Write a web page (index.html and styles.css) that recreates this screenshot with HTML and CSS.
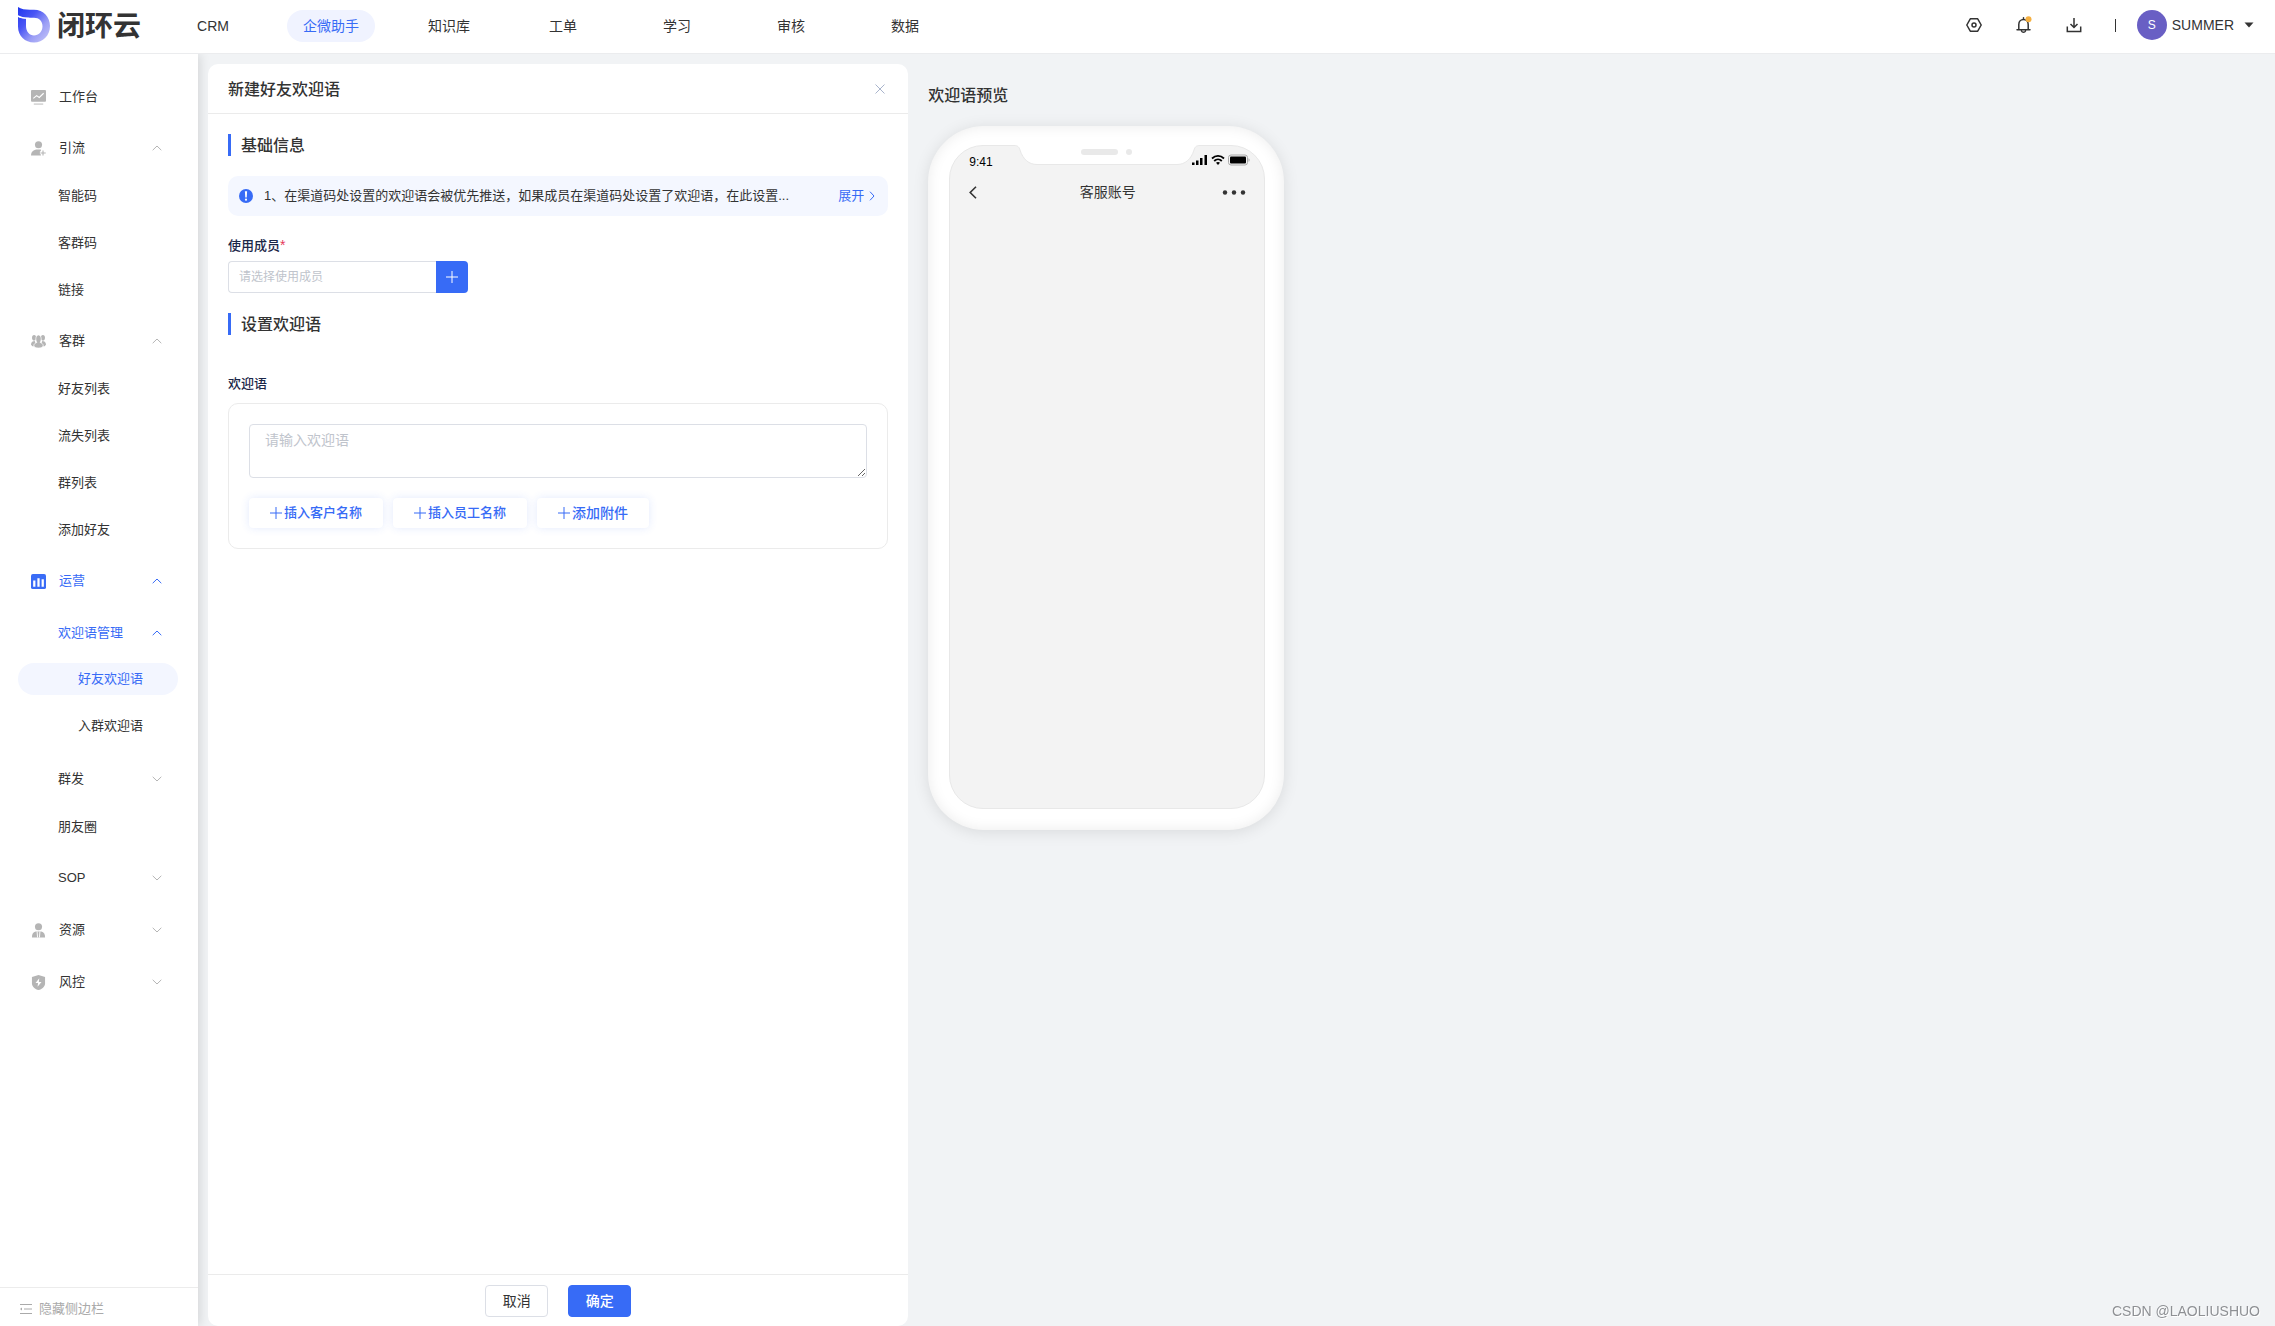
FILE: index.html
```html
<!DOCTYPE html>
<html lang="zh-CN">
<head>
<meta charset="utf-8">
<meta name="viewport" content="width=device-width, initial-scale=1">
<title>新建好友欢迎语</title>
<link rel="stylesheet" href="styles.css">
</head>
<body>
<svg class="sprite" aria-hidden="true">
  <symbol id="up" viewBox="0 0 10 6"><path d="M.7 5.2 5 1l4.3 4.2" fill="none" stroke="currentColor"/></symbol>
  <symbol id="down" viewBox="0 0 10 6"><path d="M.7.8 5 5 9.3.8" fill="none" stroke="currentColor"/></symbol>
  <symbol id="plus" viewBox="0 0 12 12"><path d="M6 0v12M0 6h12" fill="none" stroke="currentColor"/></symbol>
</svg>

<header class="topbar">
  <a class="logo" href="#">
    <svg width="34" height="38" viewBox="0 0 34 38" aria-hidden="true">
      <defs>
        <linearGradient id="brand" x1="0" y1="0" x2="1" y2="1">
          <stop offset="0" stop-color="#1f35ee"/><stop offset=".35" stop-color="#4a56f5"/><stop offset=".65" stop-color="#9a9df5"/><stop offset="1" stop-color="#c9c9f8"/>
        </linearGradient>
      </defs>
      <path fill="url(#brand)" fill-rule="evenodd" d="M1 0c3 2.200 7 2.700 12 2.700h4C26.500 2.700 33 10 33 19c0 9.500-7 16.500-16 16.500S1 29 1 19.500V10c2.500 1.200 5 1.600 8 1.700V19c0 5.500 3.500 9.500 8 9.500s8.500-4 8.500-9.300C25.500 14 22 10.800 17 10.800h-3.500C8 10.800 4 10 1 8.300z"/>
      <path d="M0 8.700c3 2 7 2.600 12 2.600" fill="none" stroke="#fff"/>
    </svg>
    <span>闭环云</span>
  </a>
  <nav class="nav">
    <a href="#"><span>CRM</span></a>
    <a href="#" class="current"><span>企微助手</span></a>
    <a href="#"><span>知识库</span></a>
    <a href="#"><span>工单</span></a>
    <a href="#"><span>学习</span></a>
    <a href="#"><span>审核</span></a>
    <a href="#"><span>数据</span></a>
  </nav>
  <div class="tools">
    <button class="tool" type="button" aria-label="设置"><svg width="16" height="16" viewBox="0 0 16 16"><path d="M4.300 1.800h7.400L15.200 8l-3.500 6.200H4.300L.8 8z" fill="none" stroke="#333" stroke-width="1.500" stroke-linejoin="round"/><circle cx="8" cy="8" r="2" fill="none" stroke="#333" stroke-width="1.500"/></svg></button>
    <button class="tool" type="button" aria-label="通知"><svg width="16" height="18" viewBox="0 0 16 18"><path d="M2.800 13.500V8.500C2.800 5.300 5 3.500 7.500 3.500s4.700 1.800 4.700 5v5M1 13.700h13M7.500 3.500V1.800M5.500 15c.8 1.800 3.200 1.800 4 0" fill="none" stroke="#333" stroke-width="1.500" stroke-linecap="round"/><circle cx="12.500" cy="3.300" r="3" fill="#f5b041"/></svg></button>
    <button class="tool" type="button" aria-label="下载"><svg width="16" height="16" viewBox="0 0 16 16"><path d="M1.300 9.500v5h13.400v-5M8 1v9M4.500 7 8 10.500 11.500 7" fill="none" stroke="#333" stroke-width="1.500"/></svg></button>
    <i class="divider"></i>
    <button class="user" type="button"><span class="avatar">S</span>SUMMER<svg width="10" height="6" viewBox="0 0 10 6" aria-hidden="true"><path d="M.5.500h9L5 5.500z" fill="#333"/></svg></button>
  </div>
</header>

<div class="body">
  <aside class="sidebar">
    <ul class="menu">
      <li><a class="leaf top" href="#"><svg class="icon" viewBox="0 0 16 16"><rect width="16" height="12.500" rx="1" fill="#b5b5b5"/><path d="M2.500 9 6 6l2.800 2L13.500 3.500" fill="none" stroke="#fff" stroke-width="1.200"/><path d="M3 15h10" stroke="#b5b5b5"/></svg>工作台</a></li>
      <li>
        <button class="group top" type="button"><svg class="icon" viewBox="0 0 16 16"><g fill="#b5b5b5"><circle cx="8" cy="4" r="3.800"/><path d="M0 15.500C0 11.500 2.500 9 7 9h3.500v6.500z"/></g><path d="M12.500 9.500v6M9.500 12.500h6.500" stroke="#fff" stroke-width="3"/><path d="M12.800 10v5.500M10 12.800h5.700" stroke="#b5b5b5" stroke-width="1.200"/></svg>引流<svg class="arrow"><use href="#up"/></svg></button>
        <ul>
          <li><a class="leaf" href="#">智能码</a></li>
          <li><a class="leaf" href="#">客群码</a></li>
          <li><a class="leaf" href="#">链接</a></li>
        </ul>
      </li>
      <li>
        <button class="group top" type="button"><svg class="icon" viewBox="0 0 16 16"><g fill="#b5b5b5"><ellipse cx="3.300" cy="4" rx="2.200" ry="3"/><ellipse cx="12.700" cy="4" rx="2.200" ry="3"/><path d="M0 11.500C0 8.500 2 7.500 4 7.500L6 13H1.500zM16 11.500c0-3-2-4-4-4L10 13h4.500z"/></g><g fill="#b5b5b5" stroke="#fff" stroke-width=".8"><path d="M3 12.500C3 10.500 5 9.300 6.200 9 4 5.500 5.500 1 8 1s4 4.500 1.800 8c1.200.3 3.200 1.500 3.200 3.500 0 1.500-2.500 2.500-5 2.500s-5-1-5-2.500z"/></g></svg>客群<svg class="arrow"><use href="#up"/></svg></button>
        <ul>
          <li><a class="leaf" href="#">好友列表</a></li>
          <li><a class="leaf" href="#">流失列表</a></li>
          <li><a class="leaf" href="#">群列表</a></li>
          <li><a class="leaf" href="#">添加好友</a></li>
        </ul>
      </li>
      <li>
        <button class="group top open" type="button"><svg class="icon" viewBox="0 0 16 16"><rect width="16" height="16" rx="2" fill="#3a6cf6"/><path d="M3.500 7v6.500M8 4.500v9M12.500 5.500v8" stroke="#fff" stroke-width="2.400"/></svg>运营<svg class="arrow"><use href="#up"/></svg></button>
        <ul>
          <li>
            <button class="group open parent" type="button">欢迎语管理<svg class="arrow"><use href="#up"/></svg></button>
            <ul class="deep">
              <li><a class="leaf selected" href="#">好友欢迎语</a></li>
              <li><a class="leaf" href="#">入群欢迎语</a></li>
            </ul>
          </li>
          <li><button class="group" type="button">群发<svg class="arrow"><use href="#down"/></svg></button></li>
          <li><a class="leaf" href="#">朋友圈</a></li>
          <li><button class="group" type="button">SOP<svg class="arrow"><use href="#down"/></svg></button></li>
        </ul>
      </li>
      <li><button class="group top" type="button"><svg class="icon" viewBox="0 0 16 16"><g fill="#b5b5b5"><circle cx="8" cy="4" r="3.800"/><path d="M1 15.500C1 12 2 9.500 5 9h6c3 .5 4 3 4 6.500z"/></g><path d="M6.500 9 7 15.500M9.500 9 9 15.500" stroke="#fff"/></svg>资源<svg class="arrow"><use href="#down"/></svg></button></li>
      <li><button class="group top" type="button"><svg class="icon" viewBox="0 0 16 16"><path d="M8 0l7 2.200v6.500c0 4-3.500 6.300-7 7.300-3.500-1-7-3.300-7-7.300V2.200z" fill="#b5b5b5"/><path d="M8.800 3.500 4.800 8.600h2.700L7 12.500l4.200-5H8.400z" fill="#fff"/></svg>风控<svg class="arrow"><use href="#down"/></svg></button></li>
    </ul>
    <button class="collapse" type="button"><svg width="12" height="12" viewBox="0 0 12 12" aria-hidden="true"><path d="M0 1.500h12M4 6h8M0 10.500h12" stroke="#aaa"/><path d="M0 6l2-1.500v3z" fill="#aaa"/></svg>隐藏侧边栏</button>
  </aside>

  <main class="main">
    <form class="panel">
      <div class="panel-head">
        <h1>新建好友欢迎语</h1>
        <button class="close" type="button" aria-label="关闭"><svg width="10" height="10" viewBox="0 0 10 10"><path d="M.5.500l9 9M9.500.500l-9 9" stroke="#a9b4cc"/></svg></button>
      </div>
      <div class="panel-body">
        <h2>基础信息</h2>
        <div class="notice">
          <svg width="14" height="14" viewBox="0 0 14 14" aria-hidden="true"><circle cx="7" cy="7" r="7" fill="#376bf6"/><path d="M5.900 2.300h2.200L7.700 8.500H6.300z" fill="#fff"/><circle cx="7" cy="10.700" r="1.100" fill="#fff"/></svg>
          <p>1、在渠道码处设置的欢迎语会被优先推送，如果成员在渠道码处设置了欢迎语，在此设置...</p>
          <a href="#">展开<svg width="6" height="10" viewBox="0 0 6 10" aria-hidden="true"><path d="M1 .7 5 5 1 9.300" fill="none" stroke="currentColor"/></svg></a>
        </div>
        <label class="label" for="member">使用成员<em>*</em></label>
        <div class="picker">
          <input id="member" type="text" placeholder="请选择使用成员">
          <button type="button" aria-label="选择成员"><svg width="12" height="12"><use href="#plus"/></svg></button>
        </div>
        <h2>设置欢迎语</h2>
        <label class="label welcome" for="welcome">欢迎语</label>
        <div class="editor">
          <textarea id="welcome" placeholder="请输入欢迎语"></textarea>
          <div class="inserts">
            <button type="button"><svg width="12" height="12"><use href="#plus"/></svg>插入客户名称</button>
            <button type="button"><svg width="12" height="12"><use href="#plus"/></svg>插入员工名称</button>
            <button type="button" class="attach"><svg width="12" height="12"><use href="#plus"/></svg>添加附件</button>
          </div>
        </div>
      </div>
      <div class="panel-foot">
        <button type="button">取消</button>
        <button type="submit" class="primary">确定</button>
      </div>
    </form>

    <section class="preview">
      <h2>欢迎语预览</h2>
      <div class="phone">
        <div class="screen">
          <svg class="notch" width="186" height="21" viewBox="0 0 186 21" aria-hidden="true"><path d="M0 .5C4 .5 5 2 6 5c3 9.500 9 14.500 17 14.500h140c8 0 14-5 17-14.500 1-3 2-4.500 6-4.500V0H0z" fill="#fff"/><path d="M0 .5C4 .5 5 2 6 5c3 9.500 9 14.500 17 14.500h140c8 0 14-5 17-14.500 1-3 2-4.500 6-4.500" fill="none" stroke="#e8e8e8"/><rect x="67" y="4" width="37" height="6" rx="3" fill="#e9e9e9"/><circle cx="115" cy="7" r="3" fill="#e9e9e9"/></svg>
          <div class="status">
            <span>9:41</span>
            <svg width="58" height="12" viewBox="0 0 58 12" aria-hidden="true">
              <path d="M0 8.500h2.500V11H0zM4 6.500h2.500V11H4zM8 4h2.500v7H8zM12.500 1H15v10h-2.500z"/>
              <path d="M20 4.500c3.500-3.400 8.500-3.400 12 0M22.200 7c2.200-2.200 5.400-2.200 7.600 0" fill="none" stroke="#000" stroke-width="1.800"/><path d="M24 8.800c1.200-1 2.800-1 4 0l-2 2.200z"/>
              <rect x="36.500" y="1" width="19" height="10" rx="2.500" fill="none" stroke="#aaa"/><rect x="38" y="2.500" width="16" height="7" rx="1"/><path d="M56.500 4.200v3.600c1.500-.5 1.500-3.100 0-3.600z" fill="#aaa"/>
            </svg>
          </div>
          <div class="chat-head">
            <svg width="8" height="13" viewBox="0 0 8 13" aria-hidden="true"><path d="M7 .8 1.200 6.500 7 12.200" fill="none" stroke="#333" stroke-width="1.600"/></svg>
            <span>客服账号</span>
            <svg width="24" height="5" viewBox="0 0 24 5" aria-hidden="true" fill="#333"><circle cx="3" cy="2.500" r="2.200"/><circle cx="12" cy="2.500" r="2.200"/><circle cx="21" cy="2.500" r="2.200"/></svg>
          </div>
        </div>
      </div>
    </section>
  </main>
</div>
<div class="watermark">CSDN @LAOLIUSHUO</div>
</body>
</html>
```
FILE: styles.css
```css
* { box-sizing: border-box; }

body {
  margin: 0;
  min-height: 100vh;
  display: flex;
  flex-direction: column;
  background: #f1f3f5;
  color: #333;
  font: 13px/20px "Liberation Sans", "Noto Sans CJK SC", sans-serif;
}

h1, h2, p, ul { margin: 0; padding: 0; }
h1, h2 { height: 22px; font-size: 16px; line-height: 24px; font-weight: 500; }
ul { list-style: none; }
a { color: inherit; text-decoration: none; }
svg { display: block; flex: none; }
button, input, textarea { font: inherit; color: inherit; }
button { padding: 0; border: 0; background: none; cursor: pointer; }
.sprite { position: absolute; width: 0; height: 0; }

/* Top bar */
.topbar {
  display: flex;
  align-items: center;
  height: 54px;
  padding-bottom: 1px;
  background: #fff;
  border-bottom: 1px solid #ebecee;
  font-size: 14px;
}
.logo {
  display: flex;
  align-items: center;
  gap: 6px;
  width: 156px;
  padding-left: 17px;
  font-size: 28px;
  line-height: 40px;
  font-weight: 700;
  white-space: nowrap;
}
.logo span { padding-top: 2px; }
.nav { display: flex; }
.nav a { display: flex; justify-content: center; min-width: 114px; padding: 0 17px; }
.nav span { padding: 0 16px; border-radius: 16px; line-height: 32px; }
.nav .current span { background: #f0f3ff; color: #376bf6; }
.tools { display: flex; align-items: center; margin-left: auto; padding: 0 21px 2px 0; }
.tool { display: grid; place-items: center; width: 50px; height: 32px; }
.divider { width: 1px; height: 13px; margin: 0 21px 0 16px; background: #333; }
.user { display: flex; align-items: center; }
.user svg { margin-left: 10px; }
.avatar {
  width: 30px;
  margin-right: 5px;
  border-radius: 50%;
  background: #695fc4;
  color: #fff;
  font-size: 12px;
  line-height: 30px;
}

/* Sidebar */
.body { flex: 1; display: flex; }
.sidebar {
  z-index: 1;
  display: flex;
  flex-direction: column;
  flex: 0 0 198px;
  background: #fff;
  box-shadow: 2px 0 10px rgba(0, 0, 0, .12);
  clip-path: inset(0 -14px 0 0);
}
.menu { flex: 1; padding-top: 27px; }
.leaf, .group {
  display: flex;
  align-items: center;
  width: 160px;
  margin-left: 18px;
  padding-left: 40px;
}
.leaf { height: 32px; margin-bottom: 15px; border-radius: 16px; }
.group { height: 40px; margin-bottom: 12px; padding-right: 16px; }
.parent { margin-bottom: 10px; }
.top { padding-left: 13px; }
.icon { width: 15px; height: 15px; margin-right: 13px; }
.arrow { width: 10px; height: 6px; margin-left: auto; color: #b5b5b5; }
.open, .open .arrow, .selected { color: #376bf6; }
.selected { background: #f3f6ff; }
.deep { padding-bottom: 2px; }
.deep .leaf { padding-left: 60px; }
.collapse {
  display: flex;
  align-items: center;
  gap: 7px;
  height: 39px;
  padding: 4px 0 0 20px;
  border-top: 1px solid #ececec;
  color: #aaa;
}

/* Form panel */
.main {
  flex: 1;
  display: grid;
  grid-template-columns: 13fr 25fr;
  gap: 20px;
  padding: 10px 0 0 10px;
}
.panel { display: flex; flex-direction: column; background: #fff; border-radius: 10px; }
.panel-head {
  display: flex;
  align-items: center;
  justify-content: space-between;
  height: 50px;
  padding: 0 23px 0 20px;
  border-bottom: 1px solid #ebebeb;
}
.panel-body { flex: 1; padding: 20px; }
.panel-body h2 { padding-left: 10px; border-left: 3px solid #376bf6; }
.notice {
  display: flex;
  align-items: center;
  height: 40px;
  margin: 20px 0 19px;
  padding: 0 13px 0 11px;
  border-radius: 10px;
  background: #f4f7ff;
}
.notice p { flex: 1; min-width: 0; margin-left: 11px; overflow: hidden; white-space: nowrap; }
.notice a { display: flex; align-items: center; gap: 5px; color: #376bf6; }
.label { display: block; height: 20px; margin-bottom: 6px; color: #1b2748; font-weight: 500; }
.label em { color: #e5395a; font-size: 14px; font-style: normal; }
.picker { display: flex; width: 240px; height: 32px; margin-bottom: 20px; }
.picker input {
  flex: 1;
  min-width: 0;
  padding: 0 10px;
  border: 1px solid #dcdfe6;
  border-right: 0;
  border-radius: 4px 0 0 4px;
  font-size: 12px;
}
.picker button {
  display: grid;
  place-items: center;
  width: 32px;
  border-radius: 0 4px 4px 0;
  background: #376bf6;
  color: #fff;
}
::placeholder { color: #c0c4cc; }
.welcome { margin: 39px 0 9px; }
.editor { padding: 20px; border: 1px solid #ebebeb; border-radius: 10px; }
.editor textarea {
  display: block;
  width: 100%;
  height: 54px;
  padding: 5px 15px;
  border: 1px solid #dcdfe6;
  border-radius: 4px;
  font-size: 14px;
  resize: vertical;
}
.inserts { display: flex; gap: 10px; margin-top: 20px; }
.inserts button {
  display: flex;
  align-items: center;
  gap: 2px;
  height: 30px;
  padding: 0 21px;
  border-radius: 4px;
  box-shadow: 0 0 8px rgba(55, 107, 246, .14);
  color: #376bf6;
  font-weight: 500;
}
.inserts .attach { font-size: 14px; }
.panel-foot {
  display: flex;
  justify-content: center;
  gap: 20px;
  padding: 10px 0 9px;
  border-top: 1px solid #ebebeb;
  font-size: 14px;
}
.panel-foot button { width: 63px; height: 32px; border: 1px solid #dcdfe6; border-radius: 4px; font-size: 14px; }
.panel-foot .primary { border-color: #376bf6; background: #376bf6; color: #fff; font-weight: 500; }

/* Phone preview */
.preview { padding-top: 20px; }
.phone {
  width: 356px;
  height: 704px;
  margin-top: 20px;
  padding: 19px 19px 21px 21px;
  border-radius: 56px;
  background: #fff;
  box-shadow: 0 2px 16px rgba(0, 0, 0, .1), inset 0 0 14px rgba(0, 0, 0, .08);
}
.screen {
  position: relative;
  height: 100%;
  padding: 8px 14px 0 19px;
  border: 1px solid #e8e8e8;
  border-radius: 34px;
  background: #f3f3f3;
}
.notch { position: absolute; top: -1px; left: 64px; }
.status { display: flex; justify-content: space-between; height: 16px; color: #000; font-size: 12px; line-height: 16px; }
.chat-head {
  display: grid;
  grid-template-columns: 1fr auto 1fr;
  align-items: center;
  height: 20px;
  margin-top: 12px;
  padding-right: 4px;
  font-size: 14px;
}
.chat-head svg:last-child { justify-self: end; }

.watermark {
  position: fixed;
  right: 15px;
  bottom: 5px;
  color: #8e9094;
  font-size: 14px;
  text-shadow: 1px 1px 0 #fff;
}
```
